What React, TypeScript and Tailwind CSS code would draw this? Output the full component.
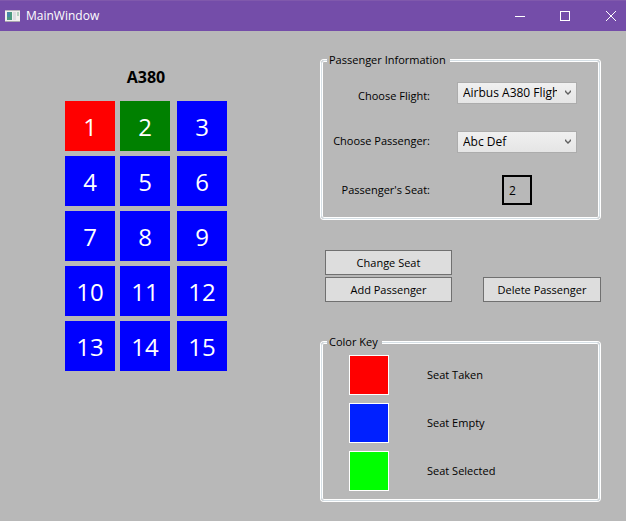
import { useState } from "react";
import type { ReactNode } from "react";

const seats = Array.from({ length: 15 }, (_, i) => i + 1);

const colorKey = [
  { label: "Seat Taken", swatch: "bg-[#ff0000]" },
  { label: "Seat Empty", swatch: "bg-[#0020ff]" },
  { label: "Seat Selected", swatch: "bg-[#00ff00]" },
];

function seatColor(seat: number, selected: number) {
  if (seat === 1) return "bg-[#ff0000]";
  if (seat === selected) return "bg-[#008000]";
  return "bg-[#0000ff]";
}

function TitleBar() {
  return (
    <header className="flex h-[31px] items-center border-t border-[#8059ac] bg-[#744da9] text-white">
      <svg className="ml-[5px]" width="15" height="12" viewBox="0 0 15 12" aria-hidden="true">
        <rect x="0" y="0" width="15" height="12" fill="#f1f1ee" />
        <rect x="0" y="0" width="15" height="1" fill="#b9b7bd" />
        <rect x="0" y="11" width="15" height="1" fill="#a9a6ae" />
        <rect x="2" y="2" width="5" height="8" fill="#4a9a80" />
        <rect x="2" y="2" width="3" height="5" fill="#4689a6" />
        <rect x="8" y="2" width="3" height="8" fill="#dcdee2" />
        <rect x="12" y="2" width="2" height="4" fill="#b5d2c0" />
      </svg>
      <h1 className="ml-1.5 flex-1 text-xs">MainWindow</h1>
      <button type="button" aria-label="Minimize" className="flex h-full w-[45px] items-center justify-center">
        <svg width="10" height="10" viewBox="0 0 10 10" stroke="currentColor">
          <path d="M0 5.5H10" />
        </svg>
      </button>
      <button type="button" aria-label="Maximize" className="flex h-full w-[45px] items-center justify-center">
        <svg width="10" height="10" viewBox="0 0 10 10" fill="none" stroke="currentColor">
          <rect x="0.5" y="0.5" width="9" height="9" />
        </svg>
      </button>
      <button type="button" aria-label="Close" className="flex h-full w-[39px] items-center justify-center pl-2">
        <svg width="10" height="10" viewBox="0 0 10 10" stroke="currentColor">
          <path d="M0 0L10 10M10 0L0 10" />
        </svg>
      </button>
    </header>
  );
}

function GroupBox({ title, children }: { title: string; children: ReactNode }) {
  return (
    <fieldset className="mx-px rounded-[3px] border border-[#d5dfe5] shadow-[0_0_0_1px_#fff,inset_0_0_0_1px_#fff]">
      <legend className="ml-[5px] bg-[#b8b8b8] pr-1 pl-0.5 leading-4">{title}</legend>
      {children}
    </fieldset>
  );
}

function Picker({ id, options }: { id: string; options: string[] }) {
  return (
    <div className="relative ml-[27px] w-[120px]">
      <select
        id={id}
        className="block h-[22px] w-full appearance-none overflow-hidden border border-[#acacac] bg-linear-to-b from-[#f0f0f0] to-[#e5e5e5] pr-[19px] pl-[5px] text-xs text-clip"
      >
        {options.map((option) => (
          <option key={option}>{option}</option>
        ))}
      </select>
      <svg
        className="pointer-events-none absolute top-2 right-[6px]"
        width="6"
        height="6"
        viewBox="0 0 6 6"
        fill="none"
        stroke="#606060"
        strokeWidth="1.4"
      >
        <path d="M0.5 0.5V1.5L3 4L5.5 1.5V0.5" />
      </svg>
    </div>
  );
}

function CommandButton({ children }: { children: ReactNode }) {
  return (
    <button type="button" className="h-[25px] border border-[#707070] bg-[#dddddd] px-1 pt-px">
      {children}
    </button>
  );
}

export default function App() {
  const [selected, setSelected] = useState(2);

  return (
    <div className="flex min-h-screen flex-col bg-[#b8b8b8] font-['Open_Sans','Noto_Sans',sans-serif] text-[11px] leading-4 text-black">
      <TitleBar />
      <main className="flex flex-1 justify-between pr-[25px] pl-[65px]">
        <section className="pt-[34px]" aria-labelledby="plane">
          <h2 id="plane" className="text-center text-base font-bold">
            A380
          </h2>
          <div className="mt-3 grid grid-cols-[55px_57px_50px] gap-y-[5px]">
            {seats.map((seat) => (
              <button
                key={seat}
                type="button"
                onClick={() => seat !== 1 && setSelected(seat)}
                className={`size-[50px] pt-0.5 text-2xl text-white ${seatColor(seat, selected)}`}
              >
                {seat}
              </button>
            ))}
          </div>
        </section>

        <section className="w-[281px] pt-[21px]">
          <GroupBox title="Passenger Information">
            <div className="grid grid-cols-[108px_1fr] gap-y-[27px] pt-[14px] pb-[13px]">
              <label htmlFor="flight" className="pt-1.5 text-right">
                Choose Flight:
              </label>
              <Picker id="flight" options={["Airbus A380 Flight 1"]} />
              <label htmlFor="passenger" className="pt-0.5 text-right">
                Choose Passenger:
              </label>
              <Picker id="passenger" options={["Abc Def"]} />
              <label htmlFor="seat" className="pt-0.5 text-right">
                Passenger's Seat:
              </label>
              <input
                id="seat"
                readOnly
                value={selected}
                className="-mt-[5px] ml-[72px] size-[30px] border-2 border-black pl-[5px] text-xs"
              />
            </div>
          </GroupBox>

          <div className="mt-[31px] mb-8 grid grid-cols-[127px_118px] justify-between gap-y-0.5 pl-[5px]">
            <CommandButton>Change Seat</CommandButton>
            <span />
            <CommandButton>Add Passenger</CommandButton>
            <CommandButton>Delete Passenger</CommandButton>
          </div>

          <GroupBox title="Color Key">
            <ul className="flex flex-col gap-2 pt-[5px] pb-[9px] pl-[27px]">
              {colorKey.map(({ label, swatch }) => (
                <li key={label} className="flex items-center gap-[38px]">
                  <span className={`size-10 border border-white ${swatch}`} />
                  {label}
                </li>
              ))}
            </ul>
          </GroupBox>
        </section>
      </main>
    </div>
  );
}
